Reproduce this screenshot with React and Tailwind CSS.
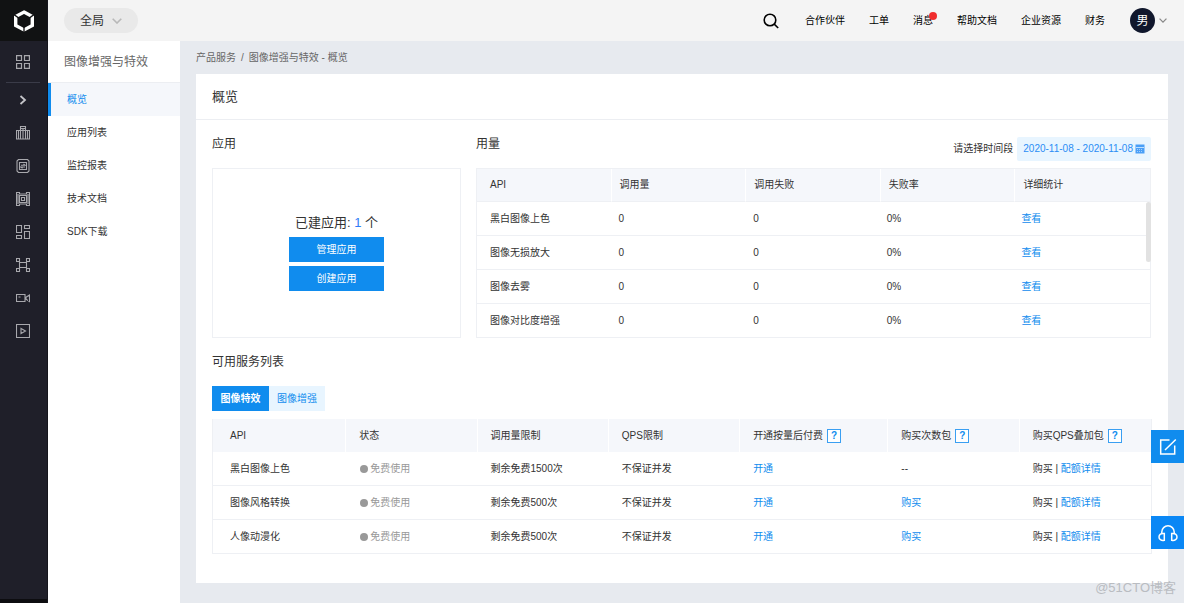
import React from "react";

const sideIcons = [
  { label: "产品", d: "M.5 4.500h13v8.500H.5zM4.500 13V.5h5V13M4.500 2.500h5M7 2.500V13M2.500 4.500V13M11.500 4.500V13" },
  { label: "数据", d: "M2.500 .5h9l1.500 1.500v10l-1.500 1.500h-9L1 12V2zM3.500 3.500h7v7h-7zM5 6.200h4L7.500 5M9 8H5l1.500 1.200" },
  { label: "芯片", d: "M.5 .5h3v1.500h7V.5h3v13h-3V12h-7v1.500h-3zM3.500 3.500h7v7h-7zM5.500 5.500h3v3h-3zM2 2v10M12 2v10" },
  { label: "面板", d: "M.5 .5h5v7h-5zM8.500 .5h5v3h-5zM8.500 6.500h5v7h-5zM.5 10.500h5v3h-5z" },
  { label: "节点", d: "M.5 .5h3v3h-3zM10.500 .5h3v3h-3zM.5 10.500h3v3h-3zM10.500 10.500h3v3h-3zM3.500 3.500v7M10.500 3.500v7M3.500 4.500h7M3.500 9.500h7" },
  { label: "视频", d: "M.5 3.500h8.500v7H.5zM10 6.200l3.500-2.200v6.500L10 8.300zM2.500 6h2" },
  { label: "播放", d: "M.5 .5h13v13H.5zM5 4.500v5l4.500-2.500z" },
];

const menu = ["概览", "应用列表", "监控报表", "技术文档", "SDK下载"];
const topLinks = ["合作伙伴", "工单", "消息", "帮助文档", "企业资源", "财务"];
const usageRows = ["黑白图像上色", "图像无损放大", "图像去雾", "图像对比度增强"];
const services = [
  { name: "黑白图像上色", limit: "剩余免费1500次", buy: false },
  { name: "图像风格转换", limit: "剩余免费500次", buy: true },
  { name: "人像动漫化", limit: "剩余免费500次", buy: true },
];
const serviceHeads = [
  { text: "API" },
  { text: "状态" },
  { text: "调用量限制" },
  { text: "QPS限制" },
  { text: "开通按量后付费", help: true },
  { text: "购买次数包", help: true },
  { text: "购买QPS叠加包", help: true },
];

function Chevron({ className }) {
  return (
    <svg viewBox="0 0 10 6" className={className} fill="none" stroke="currentColor" strokeWidth="1.600" aria-hidden="true">
      <path d="M.7 .7 5 5 9.300 .7" />
    </svg>
  );
}

function Rail() {
  return (
    <nav className="flex w-12 shrink-0 flex-col border-r border-[#15151c] bg-[#1f1f29] pr-px text-[#a8a8ad]">
      <a href="#home" aria-label="首页" className="-mr-px flex h-[41px] items-center justify-center bg-[#111213]">
        <svg viewBox="0 0 20 22" className="h-[22px] w-5" fill="none" aria-hidden="true">
          <path stroke="#fff" strokeWidth="3.400" d="M10 2.100 18.300 6.600v8.800L10 19.900 1.700 15.400V6.600z" />
          <path stroke="#111213" strokeWidth="1.300" d="M0 4.600 5 8.200M20 4.600 15 8.200M10 16.500V22" />
        </svg>
      </a>
      <a href="#all" aria-label="全部" className="flex h-[41px] items-center justify-center">
        <svg viewBox="0 0 14 14" className="size-[14px]" fill="none" stroke="currentColor" strokeWidth="1.200" aria-hidden="true">
          <path d="M.6 .6h4.900v4.900H.6zM8.500 .6h4.900v4.900H8.500zM.6 8.500h4.900v4.900H.6zM8.500 8.500h4.900v4.900H8.500z" />
        </svg>
      </a>
      <div className="mx-[6px] h-px bg-[#3a3b48]" />
      <button type="button" aria-label="展开" className="flex h-[33px] w-full items-center justify-center text-[#c4c4c8]">
        <svg viewBox="0 0 8 10" className="h-[10px] w-2" fill="none" stroke="currentColor" strokeWidth="1.800" aria-hidden="true">
          <path d="M1.500 1 6 5 1.500 9" />
        </svg>
      </button>
      {sideIcons.map((icon) => (
        <a key={icon.label} href="#product" aria-label={icon.label} className="flex h-[33px] items-center justify-center">
          <svg viewBox="0 0 14 14" className="size-[14px]" fill="none" stroke="currentColor" strokeWidth="1.100" aria-hidden="true">
            <path d={icon.d} />
          </svg>
        </a>
      ))}
      <div className="-mr-px mt-auto h-1 bg-[#0d0d10]" />
    </nav>
  );
}

function TopBar() {
  return (
    <header className="flex h-[41px] items-center justify-between bg-[#f4f4f4] pl-4 pr-[17px]">
      <button type="button" className="flex h-[25px] items-center gap-2 rounded-full bg-[#e9e9e9] px-4 text-[12px] text-[#333]">
        全局
        <Chevron className="h-[6px] w-[10px] text-[#b8b8b8]" />
      </button>
      <div className="flex items-center text-[10px] text-black">
        <button type="button" aria-label="搜索" className="mr-[26px]">
          <svg viewBox="0 0 16 16" className="size-4" fill="none" stroke="currentColor" strokeWidth="1.600" aria-hidden="true">
            <circle cx="7" cy="7" r="5.800" />
            <path d="m11.200 11.200 4 3.800" />
          </svg>
        </button>
        <nav className="flex gap-6">
          {topLinks.map((t) => (
            <a key={t} href="#nav" className="relative">
              {t}
              {t === "消息" && <span className="absolute -right-1 -top-[1px] size-2 rounded-full bg-[#f02d2d]" />}
            </a>
          ))}
        </nav>
        <button type="button" aria-label="账户" className="ml-[25px] flex items-center gap-1">
          <span className="flex size-[25px] items-center justify-center rounded-full bg-[#10172c] text-[12px] text-white">男</span>
          <Chevron className="h-[5px] w-2 text-[#888]" />
        </button>
      </div>
    </header>
  );
}

function SubMenu() {
  return (
    <aside className="w-[132px] shrink-0 bg-white">
      <h2 className="flex h-[42px] items-center border-b border-[#eceef2] pl-4 text-[12px] text-[#666]">图像增强与特效</h2>
      <nav>
        {menu.map((m, i) => (
          <a
            key={m}
            href="#menu"
            className={
              i === 0
                ? "flex h-[33px] items-center border-l-[3px] border-[#108cee] bg-[#f5f7fb] pl-4 text-[#108cee]"
                : "flex h-[33px] items-center border-l-[3px] border-transparent pl-4 text-[#333]"
            }
          >
            {m}
          </a>
        ))}
      </nav>
    </aside>
  );
}

function AppBox() {
  return (
    <section className="flex w-[249px] shrink-0 flex-col">
      <h3 className="flex h-12 items-center text-[12px]">应用</h3>
      <div className="flex flex-1 flex-col items-center justify-center gap-1 border border-[#eef0f4] pb-[2px]">
        <p className="text-[13px] leading-5">
          已建应用: <span className="text-[#2f7df6]">1</span> 个
        </p>
        <button type="button" className="h-[25px] w-[95px] bg-[#108cee] text-white">管理应用</button>
        <button type="button" className="h-[25px] w-[95px] bg-[#108cee] text-white">创建应用</button>
      </div>
    </section>
  );
}

function Usage() {
  return (
    <section className="min-w-0 flex-1 pr-px">
      <div className="flex h-12 items-center justify-between">
        <h3 className="text-[12px]">用量</h3>
        <div className="flex items-center gap-1 pt-[10px]">
          <span id="range">请选择时间段</span>
          <button type="button" aria-describedby="range" className="flex h-6 items-center gap-[2px] rounded-[2px] bg-[#e8f5ff] px-[6px] text-[#2b8df5]">
            2020-11-08 - 2020-11-08
            <svg viewBox="0 0 10 10" className="size-[10px]" aria-hidden="true">
              <path fill="#4a9ff7" d="M.5 .5h9v9h-9z" />
              <path stroke="#bfe0ff" d="M1 3.500h8" />
              <path stroke="#a5d0fb" strokeDasharray="1 1" d="M2 5.500h6M2 7.500h6" />
            </svg>
          </button>
        </div>
      </div>
      <div className="relative">
        <table className="w-full table-fixed border-separate border-spacing-0 border-x border-t border-[#eef0f4] text-left">
          <thead className="bg-[#f5f7fb]">
            <tr className="h-[33px]">
              {["API", "调用量", "调用失败", "失败率", "详细统计"].map((h) => (
                <th key={h} scope="col" className="border-b border-r border-b-[#eef0f4] border-r-white pl-2 font-normal first:pl-[13px] last:border-r-0">
                  {h}
                </th>
              ))}
            </tr>
          </thead>
          <tbody>
            {usageRows.map((r) => (
              <tr key={r} className="h-[34px]">
                <td className="border-b border-[#eef0f4] pl-[13px]">{r}</td>
                <td className="border-b border-[#eef0f4] pl-[7px]">0</td>
                <td className="border-b border-[#eef0f4] pl-[7px]">0</td>
                <td className="border-b border-[#eef0f4] pl-[6px]">0%</td>
                <td className="border-b border-[#eef0f4] pl-[6px]">
                  <a href="#view" className="text-[#108cee]">查看</a>
                </td>
              </tr>
            ))}
          </tbody>
        </table>
        <div className="absolute right-0 top-[34px] h-[60px] w-[5px] rounded-full bg-[#e2e2e2]" />
      </div>
    </section>
  );
}

function Services() {
  const cell = "border-b border-[#eef0f4] pl-[13px] first:pl-[17px]";
  return (
    <section>
      <h3 className="flex h-12 items-center text-[12px]">可用服务列表</h3>
      <div className="mb-2 flex">
        <button type="button" className="h-[25px] w-[57px] bg-[#108cee] font-bold text-white">图像特效</button>
        <button type="button" className="h-[25px] w-14 bg-[#e8f5ff] text-[#108cee]">图像增强</button>
      </div>
      <table className="w-full table-fixed border-separate border-spacing-0 border-x border-[#eef0f4] text-left">
        <colgroup>
          <col className="w-[14.2%]" />
          <col className="w-[14%]" />
          <col className="w-[14%]" />
          <col className="w-[14%]" />
          <col className="w-[15.8%]" />
          <col className="w-[14%]" />
          <col className="w-[14%]" />
        </colgroup>
        <thead className="bg-[#f5f7fb]">
          <tr className="h-[33px]">
            {serviceHeads.map((h) => (
              <th key={h.text} scope="col" className="border-r border-white pl-[13px] font-normal first:pl-[17px] last:border-r-0">
                <span className="flex items-center gap-1">
                  {h.text}
                  {h.help && (
                    <button type="button" aria-label="帮助" className="flex size-[14px] items-center justify-center border border-[#3a9ff2] bg-white font-bold leading-none text-[#108cee]">
                      ?
                    </button>
                  )}
                </span>
              </th>
            ))}
          </tr>
        </thead>
        <tbody>
          {services.map((s) => (
            <tr key={s.name} className="h-[34px]">
              <td className={cell}>{s.name}</td>
              <td className={cell}>
                <span className="flex items-center gap-[2px] text-[#999]">
                  <span className="ml-px size-2 rounded-full bg-[#999]" />
                  免费使用
                </span>
              </td>
              <td className={cell}>{s.limit}</td>
              <td className={cell}>不保证并发</td>
              <td className={cell}>
                <a href="#open" className="text-[#108cee]">开通</a>
              </td>
              <td className={cell}>{s.buy ? <a href="#buy" className="text-[#108cee]">购买</a> : "--"}</td>
              <td className={cell}>
                购买 | <a href="#quota" className="text-[#108cee]">配额详情</a>
              </td>
            </tr>
          ))}
        </tbody>
      </table>
    </section>
  );
}

export default function App() {
  return (
    <div className="relative flex min-h-screen bg-[#e7eaef] font-['Liberation_Sans','Noto_Sans_CJK_SC',sans-serif] text-[10px] leading-4 text-[#333]">
      <Rail />
      <div className="flex min-w-0 flex-1 flex-col">
        <TopBar />
        <div className="flex flex-1">
          <SubMenu />
          <main className="min-w-0 flex-1 px-4 pb-5">
            <p className="flex h-[33px] items-center gap-[5px] text-[#666]">
              <a href="#products">产品服务</a>
              <span>/</span>
              <span>图像增强与特效 - 概览</span>
            </p>
            <div className="bg-white pb-[29px]">
              <h1 className="flex h-[46px] items-center border-b border-[#eceef2] px-4 text-[13px]">概览</h1>
              <div className="px-4">
                <div className="flex gap-[15px]">
                  <AppBox />
                  <Usage />
                </div>
                <Services />
              </div>
            </div>
          </main>
        </div>
      </div>
      <div className="absolute right-0 top-[430px] flex flex-col gap-[53px]">
        <button type="button" aria-label="反馈" className="flex size-[33px] items-center justify-center bg-[#108cee]">
          <svg viewBox="0 0 18 18" className="size-[18px]" fill="none" stroke="#fff" strokeWidth="1.500" aria-hidden="true">
            <path d="M10.500 2H1.700v14h14V7.500M6 12 16.800 1.500" />
          </svg>
        </button>
        <button type="button" aria-label="客服" className="flex size-[33px] items-center justify-center bg-[#0a87f5]">
          <svg viewBox="0 0 20 18" className="h-[18px] w-5" fill="none" stroke="#fff" strokeWidth="1.500" aria-hidden="true">
            <path d="M3.800 9.500V8a6.200 6.200 0 0 1 12.400 0v1.500" />
            <path d="M6.300 9.500v6.800C3 17 1 15.200 1 12.900s2-3.900 5.300-3.400zM13.700 9.500v6.800c3.300.7 5.300-1.100 5.300-3.400s-2-3.900-5.300-3.400z" />
          </svg>
        </button>
      </div>
      <p className="absolute bottom-[5px] right-2 text-[13px] leading-5 text-[#b9bcc1]">@51CTO博客</p>
    </div>
  );
}
